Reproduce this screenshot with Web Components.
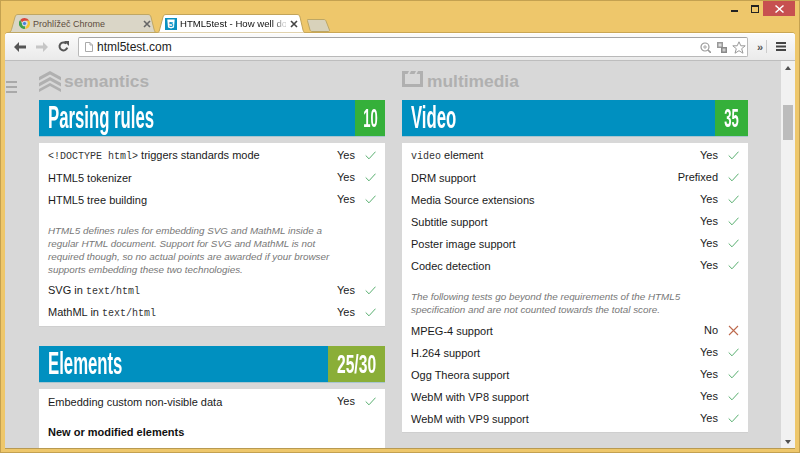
<!DOCTYPE html>
<html lang="cs">
<head>
<meta charset="utf-8">
<title>HTML5test</title>
<style>
  html, body { margin: 0; height: 453px; overflow: hidden; }
  body { font-family: "Liberation Sans", Arial, sans-serif; }
</style>
</head>
<body>
<browser-window>
  <browser-tab slot="tabs" label="Prohlížeč Chrome" icon="chrome"></browser-tab>
  <browser-tab slot="tabs" label="HTML5test - How well do" icon="html5" active></browser-tab>
  <address-bar slot="toolbar" url="html5test.com"></address-bar>

  <side-menu></side-menu>
  <page-column>
    <section-label icon="semantics">semantics</section-label>
    <score-panel name="Parsing rules" score="10" score-width="30">
      <test-row result="Yes"><code-text>&lt;!DOCTYPE html&gt;</code-text> triggers standards mode</test-row>
      <test-row result="Yes">HTML5 tokenizer</test-row>
      <test-row result="Yes">HTML5 tree building</test-row>
      <test-note style="margin-top:14px;margin-bottom:3px">HTML5 defines rules for embedding SVG and MathML inside a regular HTML document. Support for SVG and MathML is not required though, so no actual points are awarded if your browser supports embedding these two technologies.</test-note>
      <test-row result="Yes">SVG in <code-text>text/html</code-text></test-row>
      <test-row result="Yes">MathML in <code-text>text/html</code-text></test-row>
    </score-panel>
    <score-panel name="Elements" score="25/30" score-width="57" partial style="margin-top:20px">
      <test-row result="Yes">Embedding custom non-visible data</test-row>
      <test-heading>New or modified elements</test-heading>
    </score-panel>
  </page-column>
  <page-column>
    <section-label icon="multimedia">multimedia</section-label>
    <score-panel name="Video" score="35" score-width="33">
      <test-row result="Yes"><code-text>video</code-text> element</test-row>
      <test-row result="Prefixed">DRM support</test-row>
      <test-row result="Yes">Media Source extensions</test-row>
      <test-row result="Yes">Subtitle support</test-row>
      <test-row result="Yes">Poster image support</test-row>
      <test-row result="Yes">Codec detection</test-row>
      <test-note style="margin-top:14px;margin-bottom:3px">The following tests go beyond the requirements of the HTML5 specification and are not counted towards the total score.</test-note>
      <test-row result="No" failed>MPEG-4 support</test-row>
      <test-row result="Yes">H.264 support</test-row>
      <test-row result="Yes">Ogg Theora support</test-row>
      <test-row result="Yes">WebM with VP8 support</test-row>
      <test-row result="Yes">WebM with VP9 support</test-row>
    </score-panel>
  </page-column>
</browser-window>

<script>
class BrowserWindow extends HTMLElement {
  constructor() {
    super()
    this.attachShadow({ mode: 'open' }).innerHTML = `
      <style>
        :host { display: flex; flex-direction: column; height: 453px; box-sizing: border-box;
          background: #eec76b; border: 1px solid #c4a150;
          padding: 0 4px 4px; font-family: "Liberation Sans", sans-serif; }
        .title { height: 32px; flex: none; display: flex; justify-content: space-between; }
        .tabs { display: flex; align-items: flex-end; padding-left: 3px; }
        .newtab { width: 23px; height: 13px; margin: 0 0 1px 1px; display: block; }
        .controls { display: flex; align-items: flex-start; }
        .controls svg { display: block; }
        .close { width: 32px; height: 15px; background: #c75050; display: flex; align-items: center; justify-content: center; }
        .bar { height: 28px; flex: none; box-sizing: border-box; background: linear-gradient(#fbfbfb, #eaeaea);
          border-bottom: 1px solid #bdbdbd; border-radius: 3px 3px 0 0; box-shadow: inset 0 1px 0 #fff, 0 -1px 0 #c9a654; }
        .view { flex: 1; display: flex; min-height: 0; background: #d8d8d8; box-shadow: 0 1px 0 #b89a52; }
        .page { flex: 1; display: grid; grid-template-columns: 346px 346px; column-gap: 17px; align-items: start;
          padding-left: 34px; overflow: hidden; min-width: 0; }
        .scroll { width: 14px; flex: none; background: #f1f1f1; display: flex; flex-direction: column; align-items: center; justify-content: space-between; padding: 5px 0 4px; box-sizing: border-box; position: relative; }
        .thumb { width: 10px; height: 35px; background: #bcbcbc; position: absolute; top: 44px; left: 2px; }
        .tri { width: 0; height: 0; border-left: 3px solid transparent; border-right: 3px solid transparent; }
        .up { border-bottom: 4px solid #505050; }
        .down { border-top: 4px solid #505050; }
      </style>
      <div class="title">
        <div class="tabs">
          <slot name="tabs"></slot>
          <svg class="newtab" viewBox="0 0 23 13"><path d="M.5.5H17c1 0 1.500.5 2 1.500l3.500 9c.2.7 0 1.500-1 1.500H5c-1 0-1.500-.5-2-1.500L.5 2C.2 1 0 .5.500.5z" fill="#d8d2bb" stroke="#bda765"/></svg>
        </div>
        <div class="controls">
          <svg width="37" height="15" viewBox="0 0 37 15"><rect x="5" y="9" width="7" height="2" fill="#222"/><rect x="25.500" y="4.500" width="7" height="7" fill="none" stroke="#222"/><rect x="25" y="4" width="8" height="2" fill="#222"/></svg>
          <div class="close"><svg width="9" height="8" viewBox="0 0 9 8"><path d="M1 0l3.500 3L8 0l1 1-3.500 3L9 7 8 8 4.500 5 1 8 0 7l3.500-3L0 1z" fill="#fff"/></svg></div>
        </div>
      </div>
      <div class="bar"><slot name="toolbar"></slot></div>
      <div class="view">
        <div class="page"><slot></slot></div>
        <div class="scroll">
          <div class="tri up"></div><div class="thumb"></div><div class="tri down"></div>
        </div>
      </div>`
  }
}

class BrowserTab extends HTMLElement {
  constructor() {
    super()
    const active = this.hasAttribute('active')
    const icon = this.getAttribute('icon') == 'chrome'
      ? `<svg width="11" height="11" viewBox="0 0 16 16">
           <path d="M8 0a8 8 0 0 1 7 4H8a4 4 0 0 0-3.600 2.200L1.800 2.800A8 8 0 0 1 8 0z" fill="#d9473a"/>
           <path d="M15 4a8 8 0 0 1-6.500 12l3-5.500a4 4 0 0 0-.4-6.500z" fill="#f4c430"/>
           <path d="M1.800 2.800l2.700 5.400A4 4 0 0 0 9 12l-.5 4A8 8 0 0 1 1.800 2.800z" fill="#3f9f4a"/>
           <circle cx="8" cy="8" r="3" fill="#4a83d8" stroke="#fff" stroke-width=".8"/>
         </svg>`
      : `<svg width="12" height="12" viewBox="0 0 12 12">
           <rect width="12" height="12" fill="#0a90c0"/>
           <path d="M2.300 1.500h7.400l-.7 8L6 10.500l-3-1z" fill="#fff"/>
           <text x="6" y="8.600" font-family="Liberation Sans" font-weight="700" font-size="8" text-anchor="middle" fill="#0a90c0">5</text>
         </svg>`
    this.attachShadow({ mode: 'open' }).innerHTML = `
      <style>
        :host { display: block; position: relative; width: ${active ? 150 : 148}px; height: 19px; flex: none;
          color: ${active ? '#111' : '#5d4b3c'}; font-size: ${active ? 9.6 : 9}px; }
        .shape { position: absolute; left: 0; top: 0; width: 100%; height: 19px; }
        .inner { position: relative; height: 18px; display: flex; align-items: center; padding: 1px ${active ? 7 : 4}px 0 ${active ? 9 : 11}px; box-sizing: border-box; }
        .icon { width: ${active ? 15 : 14}px; flex: none; display: flex; }
        .label { flex: 1; min-width: 0; white-space: nowrap; overflow: hidden;
          -webkit-mask-image: ${active ? 'linear-gradient(90deg,#000 88%,rgba(0,0,0,.25) 97%)' : 'none'}; }
        .x { width: 10px; margin-left: 3px; flex: none; display: flex; }
      </style>
      <svg class="shape" viewBox="0 0 ${active ? 150 : 148} 19" preserveAspectRatio="none">
        ${active
          ? '<path d="M0 19c2.500 0 3-1 3.500-3L7 3c.5-1.500 1-2.500 3-2.500h131c2 0 2.500 1 3 2.500l3 13c.5 2 1.500 3 3.500 3z" fill="#fff" stroke="#c2a45a"/>'
          : '<path d="M0 18.500c2 0 3-1 3.500-3L7 3c.5-1.500 1-2.500 3-2.500h130c2 0 2.500 1 3 2.500l3 12c.5 2 1 3.500 2 3.500z" fill="#dad6c7" stroke="#bfa764"/>'}
      </svg>
      <div class="inner">
        <span class="icon">${icon}</span>
        <span class="label">${this.getAttribute('label')}</span>
        <svg class="x" width="10" height="10" viewBox="0 0 10 10"><path d="M2 2l6 6M8 2l-6 6" stroke="${active ? '#444' : '#666'}" stroke-width="1.600"/></svg>
      </div>`
  }
}

class AddressBar extends HTMLElement {
  constructor() {
    super()
    this.attachShadow({ mode: 'open' }).innerHTML = `
      <style>
        :host { display: flex; align-items: center; height: 27px; font-family: "Liberation Sans", sans-serif; }
        svg { display: block; flex: none; }
        .nav { display: flex; align-items: center; gap: 10px; padding-left: 9px; width: 73px; box-sizing: border-box; }
        .omni { width: 670px; height: 20px; box-sizing: border-box; margin-top: 1px; background: #fff; border: 1px solid #b9b9b9; border-top-color: #a4a4a4;
          border-radius: 2px; display: flex; align-items: center; padding: 0 1px 0 6px; }
        .url { flex: 1; margin-left: 4px; font-size: 12px; color: #222; }
        .extra { display: flex; align-items: center; margin-left: 9px; }
        .chev { font: 700 11px "Liberation Sans", sans-serif; color: #555; width: 8px; }
        .sep { width: 1px; height: 13px; background: #ccc; margin: 0 9px 0 1px; }
      </style>
      <div class="nav">
        <svg width="12" height="10" viewBox="0 0 12 10"><path d="M5 0L0 5l5 5V6.500h7v-3H5z" fill="#555"/></svg>
        <svg width="12" height="10" viewBox="0 0 12 10"><path d="M7 0l5 5-5 5V6.500H0v-3h7z" fill="#c6c6c6"/></svg>
        <svg width="11" height="11" viewBox="0 0 11 11"><path d="M9.300 6.700A4 4 0 1 1 8.300 2.500" fill="none" stroke="#555" stroke-width="2"/><path d="M6 0h5v5z" fill="#555"/></svg>
      </div>
      <div class="omni">
        <svg width="8" height="10" viewBox="0 0 8 10"><path d="M.5.5h4.500l2.500 2.500v6.500h-7z" fill="#fff" stroke="#aaa"/><path d="M5 .5V3h2.500" fill="none" stroke="#aaa"/></svg>
        <span class="url">${this.getAttribute('url')}</span>
        <svg width="11" height="11" viewBox="0 0 11 11"><circle cx="5" cy="5" r="4" fill="none" stroke="#999" stroke-width="1.200"/><path d="M8 8l3 3" stroke="#999" stroke-width="1.600"/><path d="M3 5h4M5 3v4" stroke="#aaa"/></svg>
        <svg width="10" height="11" viewBox="0 0 10 11" style="margin-left:6px"><rect width="6" height="6" fill="#999"/><rect x="4" y="5" width="6" height="6" fill="#8a8a8a"/><rect x="1.500" y="1.500" width="3" height="3" fill="#ddd"/><rect x="5.500" y="6.500" width="3" height="3" fill="#ccc"/></svg>
        <svg width="14" height="13" viewBox="0 0 14 13" style="margin-left:5px"><path d="M7 .8l1.800 4h4.400l-3.500 2.900 1.300 4.500L7 9.700l-4 2.500 1.300-4.500L.8 4.800h4.400z" fill="#fff" stroke="#999"/></svg>
      </div>
      <div class="extra">
        <span class="chev">»</span>
        <span class="sep"></span>
        <svg width="10" height="9" viewBox="0 0 10 9"><path d="M0 0h10v2H0zM0 3.500h10v2H0zM0 7h10v2H0z" fill="#444"/></svg>
      </div>`
  }
}

class SideMenu extends HTMLElement {
  constructor() {
    super()
    this.attachShadow({ mode: 'open' }).innerHTML = `
      <style>
        :host { display: block; position: absolute; left: 6px; top: 81px; }
        svg { display: block; }
      </style>
      <svg width="11" height="12" viewBox="0 0 11 12"><path d="M0 0h11v2H0zM0 5h11v2H0zM0 10h11v2H0z" fill="#a9a9a9"/></svg>`
  }
}

class PageColumn extends HTMLElement {
  constructor() {
    super()
    this.attachShadow({ mode: 'open' }).innerHTML = `<style>:host { display: block; }</style><slot></slot>`
  }
}

class SectionLabel extends HTMLElement {
  constructor() {
    super()
    const icon = this.getAttribute('icon') == 'semantics'
      ? `<svg width="22" height="21" viewBox="0 0 22 21"><path d="M11 0l11 6v3.500L11 3.500 0 9.500V6zM11 6l11 6v3.500L11 9.500 0 15.500V12zM11 12l11 6v3L11 15 0 21v-3z" fill="#b0b0b0"/></svg>`
      : `<svg width="21" height="16" viewBox="0 0 21 16" style="margin-right:4px"><path d="M0 0h7l-1.500 3H3v10h15V3h-3.500L16 0h5v16H0z" fill="#b0b0b0"/><path d="M9 0h5l-1.500 3h-5z" fill="#b0b0b0"/></svg>`
    this.attachShadow({ mode: 'open' }).innerHTML = `
      <style>
        :host { display: flex; align-items: flex-start; height: 39px; padding-top: 10px; box-sizing: border-box;
          font: 700 17.400px "Liberation Sans", sans-serif; color: #b0b0b0; }
        svg { display: block; flex: none; margin-right: 3px; }
        span { line-height: 20px; }
      </style>
      ${icon}<span><slot></slot></span>`
  }
}

class ScorePanel extends HTMLElement {
  constructor() {
    super()
    const partial = this.hasAttribute('partial')
    const score = this.getAttribute('score')
    this.attachShadow({ mode: 'open' }).innerHTML = `
      <style>
        :host { display: block; }
        header { display: flex; height: 36px; background: #0090c0; color: #fff; margin-bottom: 7px; box-shadow: 0 1px 0 #a9c5cf; }
        h2, .score { margin: 0; font: 700 31px/36px "Liberation Sans", sans-serif; white-space: nowrap; }
        h2 { flex: 1; padding-left: 9px; min-width: 0; }
        h2 span { display: inline-block; transform: scaleX(.54); transform-origin: 0 50%; }
        .score { width: ${this.getAttribute('score-width')}px; flex: none; display: flex; justify-content: center; font-size: 26px;
          background: ${partial ? '#8aae38' : '#35b03a'}; }
        .score span { display: inline-block; flex: none; transform: scaleX(${score.length > 2 ? .6 : .5}); }
        .list { background: #fff; padding: 1px 0 3px; box-shadow: 0 1px 0 #cfcfcf; }
      </style>
      <header>
        <h2><span>${this.getAttribute('name')}</span></h2>
        <div class="score"><span>${score}</span></div>
      </header>
      <div class="list"><slot></slot></div>`
  }
}

class TestRow extends HTMLElement {
  constructor() {
    super()
    const mark = this.hasAttribute('failed')
      ? `<svg width="11" height="11" viewBox="0 0 11 11"><path d="M1 1l9 9M10 1l-9 9" stroke="#bd6a4e" stroke-width="1.100"/></svg>`
      : `<svg width="11" height="9" viewBox="0 0 11 9"><path d="M.7 4.500l3.300 3.300L10.500.7" fill="none" stroke="#46a660" stroke-width=".9"/></svg>`
    this.attachShadow({ mode: 'open' }).innerHTML = `
      <style>
        :host { display: flex; height: 22px; align-items: center; padding: 0 9px; font: 11px "Liberation Sans", sans-serif; color: #1a1a1a; }
        .name { flex: 1; white-space: nowrap; margin-top: 1px; }
        .result { margin-top: -1px; }
        .mark { width: 11px; margin-left: 10px; display: flex; justify-content: center; }
      </style>
      <span class="name"><slot></slot></span>
      <span class="result">${this.getAttribute('result')}</span>
      <span class="mark">${mark}</span>`
  }
}

class TestNote extends HTMLElement {
  constructor() {
    super()
    this.attachShadow({ mode: 'open' }).innerHTML = `
      <style>
        :host { display: block; padding: 0 40px 0 9px; font: italic 9.850px/13px "Liberation Sans", sans-serif; color: #777; }
      </style>
      <slot></slot>`
  }
}

class TestHeading extends HTMLElement {
  constructor() {
    super()
    this.attachShadow({ mode: 'open' }).innerHTML = `
      <style>
        :host { display: block; padding: 13px 9px 14px; font: 700 11px/14px "Liberation Sans", sans-serif; color: #111; }
      </style>
      <slot></slot>`
  }
}

class CodeText extends HTMLElement {
  constructor() {
    super()
    this.attachShadow({ mode: 'open' }).innerHTML = `
      <style>
        :host { display: inline; font: 10px "Liberation Mono", monospace; color: #333; }
      </style>
      <slot></slot>`
  }
}

customElements.define('browser-window', BrowserWindow)
customElements.define('browser-tab', BrowserTab)
customElements.define('address-bar', AddressBar)
customElements.define('side-menu', SideMenu)
customElements.define('page-column', PageColumn)
customElements.define('section-label', SectionLabel)
customElements.define('score-panel', ScorePanel)
customElements.define('test-row', TestRow)
customElements.define('test-note', TestNote)
customElements.define('test-heading', TestHeading)
customElements.define('code-text', CodeText)
</script>
</body>
</html>
